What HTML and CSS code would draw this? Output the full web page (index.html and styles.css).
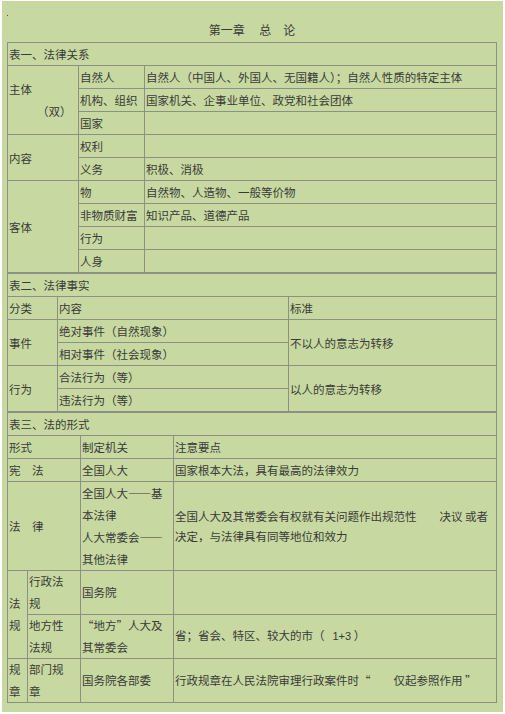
FILE: index.html
```html
<!DOCTYPE html>
<html lang="zh-CN">
<head>
<meta charset="utf-8">
<title>第一章 总论</title>
<link rel="stylesheet" href="styles.css">
</head>
<body>
<div class="page">
  <div class="title"><i class="dot"></i>第一章　 总　论</div>

  <table class="t">
    <colgroup><col class="w71"><col class="w66"><col></colgroup>
    <tr><td colspan="3">表一、法律关系</td></tr>
    <tr><td rowspan="3">主体<br><span class="ind">（双）</span></td><td>自然人</td><td>自然人（中国人、外国人、无国籍人）；自然人性质的特定主体</td></tr>
    <tr><td>机构、组织</td><td>国家机关、企事业单位、政党和社会团体</td></tr>
    <tr><td>国家</td><td></td></tr>
    <tr><td rowspan="2">内容</td><td>权利</td><td></td></tr>
    <tr><td>义务</td><td>积极、消极</td></tr>
    <tr><td rowspan="4">客体</td><td>物</td><td>自然物、人造物、一般等价物</td></tr>
    <tr><td>非物质财富</td><td>知识产品、道德产品</td></tr>
    <tr><td>行为</td><td></td></tr>
    <tr><td>人身</td><td></td></tr>
  </table>

  <table class="t">
    <colgroup><col class="w50"><col class="w231"><col></colgroup>
    <tr><td colspan="3">表二、法律事实</td></tr>
    <tr><td>分类</td><td>内容</td><td>标准</td></tr>
    <tr><td rowspan="2">事件</td><td>绝对事件（自然现象）</td><td rowspan="2">不以人的意志为转移</td></tr>
    <tr><td>相对事件（社会现象）</td></tr>
    <tr><td rowspan="2">行为</td><td>合法行为（等）</td><td rowspan="2">以人的意志为转移</td></tr>
    <tr><td>违法行为（等）</td></tr>
  </table>

  <table class="t">
    <colgroup><col class="w20"><col class="w53"><col class="w93"><col></colgroup>
    <tr><td colspan="4">表三、法的形式</td></tr>
    <tr><td colspan="2">形式</td><td>制定机关</td><td>注意要点</td></tr>
    <tr><td colspan="2">宪　法</td><td>全国人大</td><td>国家根本大法，具有最高的法律效力</td></tr>
    <tr><td colspan="2">法　律</td><td>全国人大——基<br>本法律<br>人大常委会——<br>其他法律</td><td class="tight">全国人大及其常委会有权就有关问题作出规范性　　决议 或者<br>决定，与法律具有同等地位和效力</td></tr>
    <tr class="two"><td rowspan="2" class="narrow">法<br>规</td><td>行政法<br>规</td><td>国务院</td><td></td></tr>
    <tr class="two"><td>地方性<br>法规</td><td>“地方”人大及<br>其常委会</td><td>省；省会、特区、较大的市（<span class="gap"></span><span class="lat">1+3</span> ）</td></tr>
    <tr class="two"><td class="narrow">规<br>章</td><td>部门规<br>章</td><td>国务院各部委</td><td>行政规章在人民法院审理行政案件时“　　仅起参照作用 ”</td></tr>
  </table>
</div>
</body>
</html>
```

FILE: styles.css
```css
html, body {
  margin: 0;
  padding: 0;
  background: #ffffff;
}

body {
  font-family: "Noto Sans CJK SC", "Noto Sans", sans-serif;
  font-size: 11.5px;
  color: #3a3a3a;
}

.page {
  margin: 1px 2px 0 2px;
  padding: 0 6px 9px 5px;
  background: #c7d9a0;
}

.title {
  box-sizing: border-box;
  height: 41px;
  padding-top: 18px;
  line-height: 22px;
  font-size: 12px;
  text-align: center;
  white-space: pre;
}

.dot {
  float: left;
  width: 1px;
  height: 1px;
  margin-top: -4px;
  background: #555555;
}

.t {
  width: 490px;
  table-layout: fixed;
  border-collapse: collapse;
  border: 1px solid #8a9285;
}

.t td {
  border: 1px solid #8a9285;
  padding: 0 0 0 1px;
  line-height: 22px;
  height: 22px;
  vertical-align: middle;
  white-space: nowrap;
  overflow: hidden;
}

.t td.tight {
  line-height: 20px;
}

.t tr.two td {
  line-height: 21.5px;
}

.ind {
  padding-left: 28px;
}

.gap {
  display: inline-block;
  width: 8px;
}

.lat {
  font-family: "Liberation Sans", Arial, sans-serif;
  font-size: 11px;
}

.w71 { width: 71px; }
.w66 { width: 66px; }
.w50 { width: 50px; }
.w231 { width: 231px; }
.w20 { width: 20px; }
.w53 { width: 53px; }
.w93 { width: 93px; }
```
